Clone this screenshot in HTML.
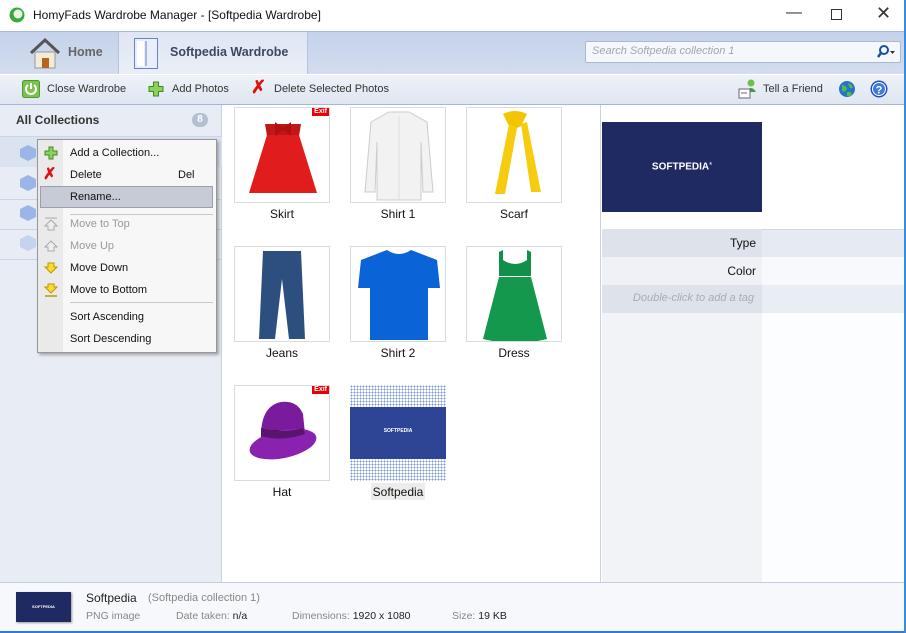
<!DOCTYPE html>
<html><head><meta charset="utf-8"><style>
*{margin:0;padding:0;box-sizing:border-box}
body{width:906px;height:633px;overflow:hidden;position:relative;font-family:"Liberation Sans",sans-serif;font-size:12px;color:#1e1e1e;background:#fff}
.a{position:absolute}
.thumb{position:absolute;width:96px;height:96px;border:1px solid #d6dbe4;background:#fff;overflow:hidden}
.lbl{position:absolute;width:96px;text-align:center;font-size:12px;color:#111}
.exif{position:absolute;right:0;top:0;background:#e00;color:#fff;font-size:7px;font-weight:bold;padding:0 2px;line-height:8px}
.mi{position:absolute;left:70px;font-size:11px;color:#111}
.dis{color:#9a9a9a}
</style></head><body>
<div class="a" style="left:0;top:0;width:906px;height:31px;background:#fff"></div>
<svg class="a" style="left:9px;top:7px" width="16" height="16"><circle cx="8" cy="8" r="7.5" fill="#3aa83a"/><circle cx="9" cy="7" r="4.5" fill="#e8f8e0"/></svg>
<div class="a" style="left:33px;top:8px;font-size:12px;color:#111">HomyFads Wardrobe Manager - [Softpedia Wardrobe]</div>
<div class="a" style="left:786px;top:4px;font-size:16px;color:#333">&#8212;</div>
<div class="a" style="left:831px;top:9px;width:11px;height:11px;border:1px solid #333"></div>
<div class="a" style="left:876px;top:3px;font-size:18px;color:#333">&#10005;</div>
<div class="a" style="left:0;top:31px;width:906px;height:43px;background:linear-gradient(#c5d2ea,#d3ddee);border-top:1px solid #a9bbdb"></div>
<div class="a" style="left:118px;top:32px;width:190px;height:42px;background:linear-gradient(#dfe6f3,#eaeff7);border-left:1px solid #b5c4dd;border-right:1px solid #b5c4dd"></div>
<svg class="a" style="left:28px;top:37px" width="34" height="32"><path d="M3 16 L17 3 L31 16" fill="none" stroke="#555" stroke-width="3"/><rect x="7" y="15" width="20" height="16" fill="#f4ecd8" stroke="#999"/><rect x="14" y="21" width="7" height="10" fill="#b5651d"/></svg>
<div class="a" style="left:68px;top:45px;font-size:12.5px;font-weight:bold;color:#666">Home</div>
<svg class="a" style="left:134px;top:38px" width="24" height="31"><rect x="0.5" y="0.5" width="23" height="30" fill="#e8eefa" stroke="#6a7fd0"/><rect x="3" y="3" width="7" height="25" fill="#fff"/><line x1="12" y1="3" x2="12" y2="28" stroke="#6a7fd0"/></svg>
<div class="a" style="left:170px;top:45px;font-size:12.5px;font-weight:bold;color:#3c4660">Softpedia Wardrobe</div>
<div class="a" style="left:585px;top:41px;width:316px;height:22px;background:#f4f7fc;border:1px solid #a9b8d3;border-radius:2px"></div>
<div class="a" style="left:592px;top:45px;font-size:11px;font-style:italic;color:#a0a6b2">Search Softpedia collection 1</div>
<svg class="a" style="left:876px;top:45px" width="20" height="14"><circle cx="8" cy="5" r="4" fill="none" stroke="#1a4fa0" stroke-width="2"/><line x1="5" y1="8" x2="2" y2="12" stroke="#1a4fa0" stroke-width="2.5"/><path d="M14 6 h5 l-2.5 3z" fill="#333"/></svg>
<div class="a" style="left:0;top:74px;width:906px;height:31px;background:linear-gradient(#eef2f8,#dfe6f1);border-bottom:1px solid #a5b6d3;border-top:1px solid #fff"></div>
<svg class="a" style="left:22px;top:80px" width="18" height="18"><rect x="0.5" y="0.5" width="17" height="17" rx="2" fill="#7cc24f" stroke="#4e9a2a"/><path d="M6 5 A5 5 0 1 0 12 5" fill="none" stroke="#fff" stroke-width="2"/><line x1="9" y1="3" x2="9" y2="9" stroke="#fff" stroke-width="2"/></svg>
<div class="a" style="left:47px;top:83px;font-size:11px;color:#333">Close Wardrobe</div>
<svg class="a" style="left:148px;top:81px" width="16" height="16"><path d="M5.5 1h5v4.5h4.5v5h-4.5v4.5h-5v-4.5h-4.5v-5h4.5z" fill="#8bd15a" stroke="#3f8a26"/></svg>
<div class="a" style="left:172px;top:83px;font-size:11px;color:#333">Add Photos</div>
<div class="a" style="left:251px;top:77px;font-size:18px;font-weight:bold;color:#e01010">&#10007;</div>
<div class="a" style="left:274px;top:83px;font-size:11px;color:#333">Delete Selected Photos</div>
<svg class="a" style="left:738px;top:79px" width="20" height="20"><circle cx="13" cy="4" r="3.5" fill="#6cc04a"/><path d="M8 13 q5-8 10 0z" fill="#3aa03a"/><rect x="1" y="10" width="11" height="9" fill="#fff" stroke="#667"/><line x1="3" y1="14" x2="9" y2="14" stroke="#667"/></svg>
<div class="a" style="left:763px;top:83px;font-size:11px;color:#333">Tell a Friend</div>
<svg class="a" style="left:838px;top:80px" width="18" height="18"><circle cx="9" cy="9" r="8" fill="#2a70d0"/><path d="M4 5q4 0 5 4q-2 4-5 2z M10 3q4 1 5 5q-3 1-4-2z M9 12q3-1 5 2q-2 3-5 2z" fill="#4cc040"/></svg>
<svg class="a" style="left:870px;top:80px" width="18" height="18"><circle cx="9" cy="9" r="8.5" fill="#1d50b8"/><circle cx="9" cy="9" r="6.5" fill="#3b7ae0" stroke="#fff"/><text x="9" y="13.5" font-size="11" font-weight="bold" fill="#fff" text-anchor="middle" font-family="Liberation Sans">?</text></svg>
<div class="a" style="left:0;top:105px;width:222px;height:478px;background:#e8ecf4;border-right:1px solid #c8d2e3"></div>
<div class="a" style="left:16px;top:113px;font-size:12px;font-weight:bold;color:#333">All Collections</div>
<div class="a" style="left:192px;top:113px;width:16px;height:14px;border-radius:7px;background:#b4bfd2;color:#fff;font-size:10px;font-weight:bold;text-align:center;line-height:14px">8</div>
<div class="a" style="left:0;top:136px;width:222px;height:31px;background:#dce3f0;border-top:1px solid #ccd5e5"></div>
<div class="a" style="left:0;top:199px;width:222px;height:1px;background:#ccd5e5"></div>
<div class="a" style="left:0;top:229px;width:222px;height:1px;background:#ccd5e5"></div>
<div class="a" style="left:0;top:259px;width:222px;height:1px;background:#ccd5e5"></div>
<svg class="a" style="left:18px;top:143px" width="20" height="110"><g fill="#9bb6e6"><path d="M2 6l8-4 8 4v8l-8 4-8-4z"/><path d="M2 36l8-4 8 4v8l-8 4-8-4z"/><path d="M2 66l8-4 8 4v8l-8 4-8-4z"/><path d="M2 96l8-4 8 4v8l-8 4-8-4z" opacity=".45"/></g></svg>
<div class="thumb" style="left:234px;top:107px"><svg width="96" height="96"><path d="M30 16h36l-2 12h-32z" fill="#c01818"/><path d="M32 27h32l18 58h-68z" fill="#e01c1c"/><path d="M40 14l8 6 8-6v14l-8-6-8 6z" fill="#b01010"/></svg><div class="exif">Exif</div></div>
<div class="lbl" style="left:234px;top:207px">Skirt</div>
<div class="thumb" style="left:350px;top:107px"><svg width="96" height="96"><path d="M38 4h20l18 10 6 70h-10l-2-50v58h-44v-58l-2 50h-10l6-70z" fill="#f2f2f2" stroke="#ccc"/><line x1="48" y1="8" x2="48" y2="92" stroke="#ddd"/></svg></div>
<div class="lbl" style="left:350px;top:207px">Shirt 1</div>
<div class="thumb" style="left:466px;top:107px"><svg width="96" height="96"><path d="M36 6q12-6 24 0l-6 12q-6 4-12 0z" fill="#f2c500"/><path d="M42 16l-14 70h10l12-66zM54 16l10 68h10l-14-70z" fill="#f5cc10"/></svg></div>
<div class="lbl" style="left:466px;top:207px">Scarf</div>
<div class="thumb" style="left:234px;top:246px"><svg width="96" height="96"><path d="M28 4h38l4 88h-16l-7-60-7 60h-16z" fill="#2d4f80"/></svg></div>
<div class="lbl" style="left:234px;top:346px">Jeans</div>
<div class="thumb" style="left:350px;top:246px"><svg width="96" height="96"><path d="M36 3q12 8 24 0l26 10 3 28h-12v52h-58v-52h-12l3-28z" fill="#0a64d8"/></svg></div>
<div class="lbl" style="left:350px;top:346px">Shirt 2</div>
<div class="thumb" style="left:466px;top:246px"><svg width="96" height="96"><path d="M36 3v10q12 8 24 0v-10l4 2v24h-32v-24z" fill="#12904a"/><path d="M32 30h32l16 62q-32 8-64 0z" fill="#13984e"/></svg></div>
<div class="lbl" style="left:466px;top:346px">Dress</div>
<div class="thumb" style="left:234px;top:385px"><svg width="96" height="96"><path d="M26 50q0-30 20-34q16-2 22 12l2 20z" fill="#7a1a9c"/><path d="M26 44h44v10h-44z" fill="#4a1060"/><ellipse cx="48" cy="58" rx="34" ry="14" fill="#8a22b0" transform="rotate(-12 48 58)"/><path d="M26 50q20 6 44-2l-2-6q-20 6-42 0z" fill="#5a1470"/></svg><div class="exif">Exif</div></div>
<div class="lbl" style="left:234px;top:485px">Hat</div>
<div class="thumb" style="left:350px;top:385px;border:none;background:radial-gradient(circle,#7c9ad8 0.8px,#fff 1px);background-size:3px 3px"><div class="a" style="left:0;top:22px;width:96px;height:52px;background:#2e4494"></div><div class="a" style="left:0;top:43px;width:96px;text-align:center;color:#fff;font-size:5px;font-weight:bold">SOFTPEDIA</div></div>
<div class="a" style="left:371px;top:483px;width:54px;height:17px;background:#ececec"></div>
<div class="lbl" style="left:350px;top:485px">Softpedia</div>
<div class="a" style="left:600px;top:105px;width:1px;height:478px;background:#c8d2e3"></div>
<div class="a" style="left:602px;top:122px;width:160px;height:90px;background:#202a62"></div>
<div class="a" style="left:602px;top:161px;width:160px;text-align:center;color:#fff;font-size:10px;font-weight:bold">SOFTPEDIA<sup style="font-size:4px">®</sup></div>
<div class="a" style="left:602px;top:229px;width:304px;height:28px;background:#e6eaf2;border-top:1px solid #d0d7e4"></div>
<div class="a" style="left:602px;top:229px;width:160px;height:28px;background:#dde2eb"></div>
<div class="a" style="left:602px;top:257px;width:304px;height:28px;background:#f8f9fc"></div>
<div class="a" style="left:602px;top:257px;width:160px;height:28px;background:#eff1f6"></div>
<div class="a" style="left:602px;top:285px;width:304px;height:28px;background:#e9edf4"></div>
<div class="a" style="left:602px;top:285px;width:160px;height:28px;background:#dde2eb"></div>
<div class="a" style="left:602px;top:313px;width:160px;height:269px;background:#f2f3f7"></div>
<div class="a" style="left:762px;top:313px;width:143px;height:269px;background:#fcfdfe"></div>
<div class="a" style="left:602px;top:236px;width:154px;text-align:right;font-size:12px;color:#111">Type</div>
<div class="a" style="left:602px;top:264px;width:154px;text-align:right;font-size:12px;color:#111">Color</div>
<div class="a" style="left:602px;top:292px;width:152px;text-align:right;font-size:11px;font-style:italic;color:#a8acb4">Double-click to add a tag</div>
<div class="a" style="left:0;top:582px;width:906px;height:51px;background:#f7f8fc;border-top:1px solid #c4cddd;border-bottom:2px solid #2a7fd4"></div>
<div class="a" style="left:904px;top:0;width:2px;height:633px;background:#3c8ad8"></div>
<div class="a" style="left:16px;top:592px;width:55px;height:30px;background:#202a62;box-shadow:1px 1px 2px #999"></div>
<div class="a" style="left:16px;top:604px;width:55px;text-align:center;color:#fff;font-size:4px;font-weight:bold">SOFTPEDIA</div>
<div class="a" style="left:86px;top:591px;font-size:12px;color:#222">Softpedia</div>
<div class="a" style="left:148px;top:592px;font-size:11px;color:#888">(Softpedia collection 1)</div>
<div class="a" style="left:86px;top:610px;font-size:10.5px;color:#888">PNG image</div>
<div class="a" style="left:176px;top:610px;font-size:10.5px;color:#888">Date taken: <span style="color:#222">n/a</span></div>
<div class="a" style="left:292px;top:610px;font-size:10.5px;color:#888">Dimensions: <span style="color:#222">1920 x 1080</span></div>
<div class="a" style="left:452px;top:610px;font-size:10.5px;color:#888">Size: <span style="color:#222">19 KB</span></div>
<div class="a" style="left:37px;top:139px;width:180px;height:214px;background:#f7f7f7;border:1px solid #979797;box-shadow:2px 2px 3px rgba(0,0,0,.3)"></div>
<div class="a" style="left:38px;top:140px;width:25px;height:212px;background:#eaeaea"></div>
<div class="a" style="left:40px;top:186px;width:173px;height:22px;background:#c6cbd5;border:1px solid #9aa0ab"></div>
<div class="a" style="left:70px;top:214px;width:143px;height:1px;background:#c8c8c8"></div>
<div class="a" style="left:70px;top:302px;width:143px;height:1px;background:#c8c8c8"></div>
<svg class="a" style="left:44px;top:146px" width="14" height="14"><path d="M5 1h4v4h4v4h-4v4h-4v-4h-4v-4h4z" fill="#8bd15a" stroke="#3f8a26"/></svg>
<div class="a" style="left:43px;top:164px;font-size:16px;font-weight:bold;color:#e01010">&#10007;</div>
<svg class="a" style="left:44px;top:217px" width="14" height="14"><line x1="1" y1="1" x2="13" y2="1" stroke="#aaa"/><path d="M7 3l6 6h-3v4h-6v-4h-3z" fill="#eee" stroke="#aaa"/></svg>
<svg class="a" style="left:44px;top:239px" width="14" height="14"><path d="M7 2l6 6h-3v4h-6v-4h-3z" fill="#eee" stroke="#aaa"/></svg>
<svg class="a" style="left:44px;top:261px" width="14" height="14"><path d="M7 12l6-6h-3v-4h-6v4h-3z" fill="#f8dc30" stroke="#b89a00"/></svg>
<svg class="a" style="left:44px;top:283px" width="14" height="14"><path d="M7 10l6-6h-3v-3h-6v3h-3z" fill="#f8dc30" stroke="#b89a00"/><line x1="1" y1="13" x2="13" y2="13" stroke="#b89a00" stroke-width="1.5"/></svg>
<div class="mi" style="top:147px">Add a Collection...</div>
<div class="mi" style="top:169px">Delete</div>
<div class="a" style="left:178px;top:169px;font-size:11px;color:#111">Del</div>
<div class="mi" style="top:191px">Rename...</div>
<div class="mi dis" style="top:218px">Move to Top</div>
<div class="mi dis" style="top:240px">Move Up</div>
<div class="mi" style="top:262px">Move Down</div>
<div class="mi" style="top:284px">Move to Bottom</div>
<div class="mi" style="top:311px">Sort Ascending</div>
<div class="mi" style="top:333px">Sort Descending</div>
</body></html>
